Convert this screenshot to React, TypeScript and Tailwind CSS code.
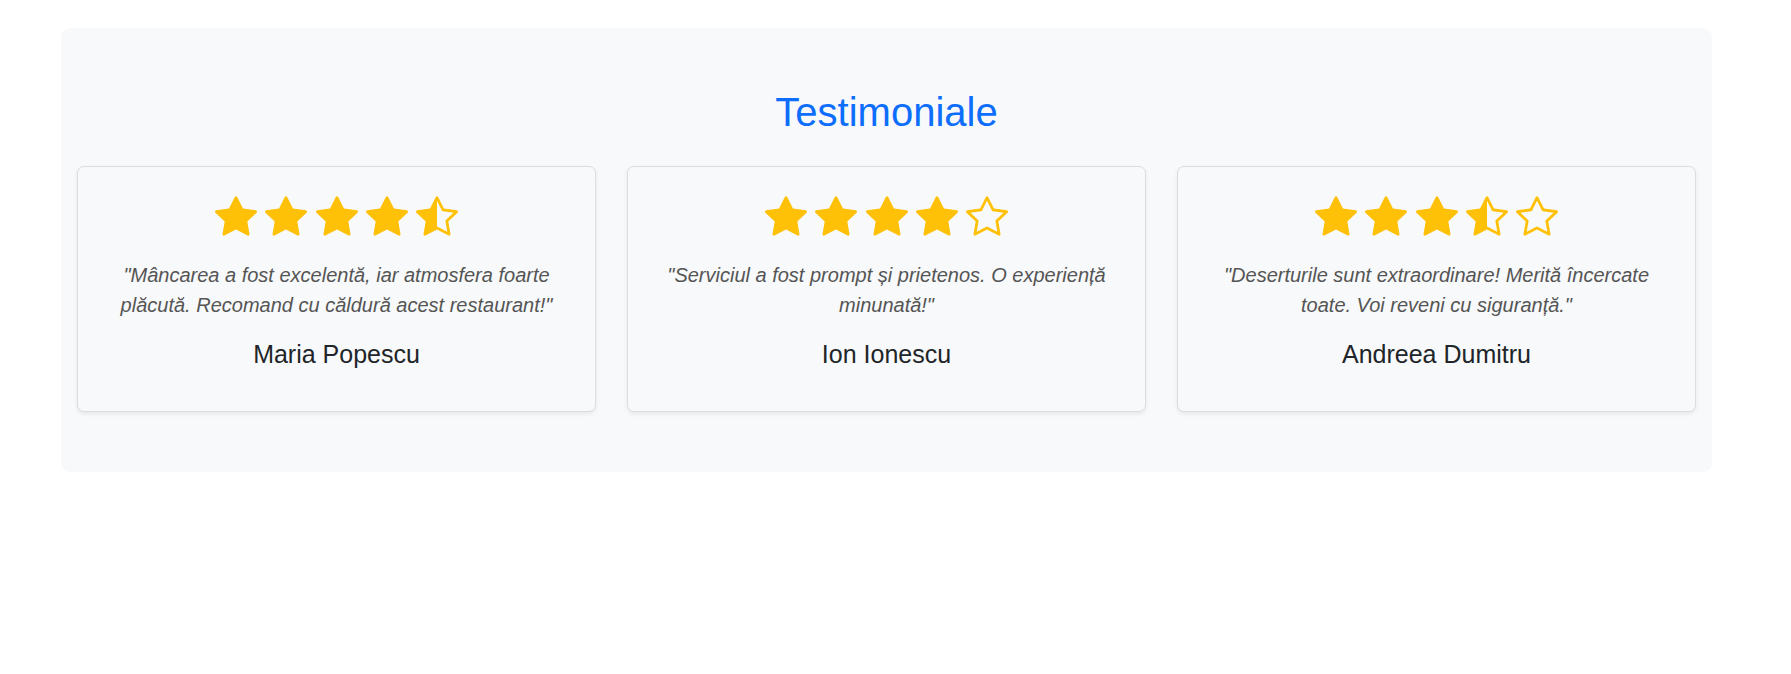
import React from "react";
import { BsStarFill, BsStarHalf, BsStar } from "react-icons/bs";

type T = { stars: ("f" | "h" | "e")[]; text: string; name: string };

const data: T[] = [
  {
    stars: ["f", "f", "f", "f", "h"],
    text: "\"Mâncarea a fost excelentă, iar atmosfera foarte plăcută. Recomand cu căldură acest restaurant!\"",
    name: "Maria Popescu",
  },
  {
    stars: ["f", "f", "f", "f", "e"],
    text: "\"Serviciul a fost prompt și prietenos. O experiență minunată!\"",
    name: "Ion Ionescu",
  },
  {
    stars: ["f", "f", "f", "h", "e"],
    text: "\"Deserturile sunt extraordinare! Merită încercate toate. Voi reveni cu siguranță.\"",
    name: "Andreea Dumitru",
  },
];

function Star({ k }: { k: "f" | "h" | "e" }) {
  const cls = "w-[42px] h-[42px] text-[#ffc107] shrink-0";
  if (k === "f") return <BsStarFill className={cls} />;
  if (k === "h") return <BsStarHalf className={cls} />;
  return <BsStar className={cls} />;
}

export default function App() {
  return (
    <div
      className="min-h-[674px] bg-white pt-[28px] pl-[61px] pr-[79px]"
      style={{ fontFamily: '"Liberation Sans", Arial, sans-serif' }}
    >
      <section className="bg-[#f8f9fa] rounded-[9px] pt-[60px] pb-[60px]">
        <h2 className="text-center text-[40px] leading-[48px] text-[#0d6efd] font-normal">
          Testimoniale
        </h2>
        <div className="mt-[30px] px-[16px] grid grid-cols-3 gap-[31px]">
          {data.map((t) => (
            <div
              key={t.name}
              className="bg-[#f8f9fa] border border-[#dcdddf] rounded-[7px] shadow-[0_2px_4px_rgba(0,0,0,0.075)] px-[24px] pt-[28px] pb-[42px] flex flex-col items-center text-center"
            >
              <div className="flex gap-[8.3px] h-[42px]">
                {t.stars.map((s, i) => (
                  <Star key={i} k={s} />
                ))}
              </div>
              <p className="mt-[23px] italic text-[20px] leading-[30px] text-[#555]">
                {t.text}
              </p>
              <div className="mt-[19px] text-[25px] leading-[30px] text-[#212529]">
                {t.name}
              </div>
            </div>
          ))}
        </div>
      </section>
    </div>
  );
}
